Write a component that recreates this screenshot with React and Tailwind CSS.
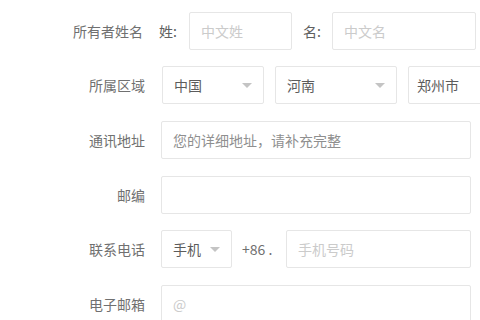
import React from 'react';

const font = { fontFamily: '"Noto Sans CJK SC", "Liberation Sans", sans-serif' };

const Arrow = () => (
  <svg width="10" height="5" viewBox="0 0 10 5" className="shrink-0">
    <path d="M0 0 L10 0 L5 5 Z" fill="#c4c4c4" />
  </svg>
);

const Select = ({ value, className = '', showArrow = true, pad = 'pl-[11px] pr-[11px]' }) => (
  <div
    className={`h-[38px] shrink-0 flex items-center justify-between border border-[#e6e6e6] rounded-[2px] bg-white text-[14px] text-[#5c5c5c] ${pad} ${className}`}
  >
    <span>{value}</span>
    {showArrow && <Arrow />}
  </div>
);

const Field = ({ placeholder, className = '', tone = 'placeholder:text-[#cbcbcb]' }) => (
  <input
    readOnly
    placeholder={placeholder}
    className={`h-[38px] shrink-0 border border-[#e6e6e6] rounded-[2px] bg-white px-[11px] text-[14px] text-[#555] outline-none ${tone} ${className}`}
    style={font}
  />
);

const Row = ({ label, children, className = '', labelClass = '' }) => (
  <div className={`flex items-center h-[38px] ${className}`}>
    <div className={`w-[145px] shrink-0 text-right text-[14px] text-[#707070] ${labelClass}`}>{label}</div>
    <div className="flex items-center ml-[16px]">{children}</div>
  </div>
);

export default function App() {
  return (
    <div className="w-[480px] h-[320px] overflow-hidden bg-white flex flex-col pt-[12px]" style={font}>
      <Row label="所有者姓名" labelClass="pr-[2px]">
        <span className="-ml-[2px] w-[30px] text-[14px] text-[#606060]">姓:</span>
        <Field placeholder="中文姓" className="w-[103px]" />
        <span className="ml-[11px] w-[29px] text-[14px] text-[#606060]">名:</span>
        <Field placeholder="中文名" className="w-[144px]" />
      </Row>
      <div className="flex items-center h-[38px] mt-[16px]">
        <div className="w-[145px] shrink-0 text-right text-[14px] text-[#707070]">所属区域</div>
        <div className="flex items-center ml-[17px] gap-[11px]">
          <Select value="中国" className="w-[102px]" />
          <Select value="河南" className="w-[122px]" />
          <Select value="郑州市" className="w-[100px]" showArrow={false} pad="pl-[8px]" />
        </div>
      </div>
      <Row label="通讯地址" className="mt-[17px]">
        <Field placeholder="您的详细地址，请补充完整" className="w-[310px]" tone="placeholder:text-[#8f8f8f]" />
      </Row>
      <Row label="邮编" className="mt-[17px]">
        <Field placeholder="" className="w-[310px]" />
      </Row>
      <Row label="联系电话" className="mt-[16px]">
        <Select value="手机" className="w-[71px]" pad="pl-[11px] pr-[11px]" />
        <span className="ml-[10px] w-[44px] text-[14px] text-[#707070]">+86 .</span>
        <Field placeholder="手机号码" className="w-[185px]" />
      </Row>
      <Row label="电子邮箱" className="mt-[17px]">
        <Field placeholder="@" className="w-[310px]" />
      </Row>
    </div>
  );
}
